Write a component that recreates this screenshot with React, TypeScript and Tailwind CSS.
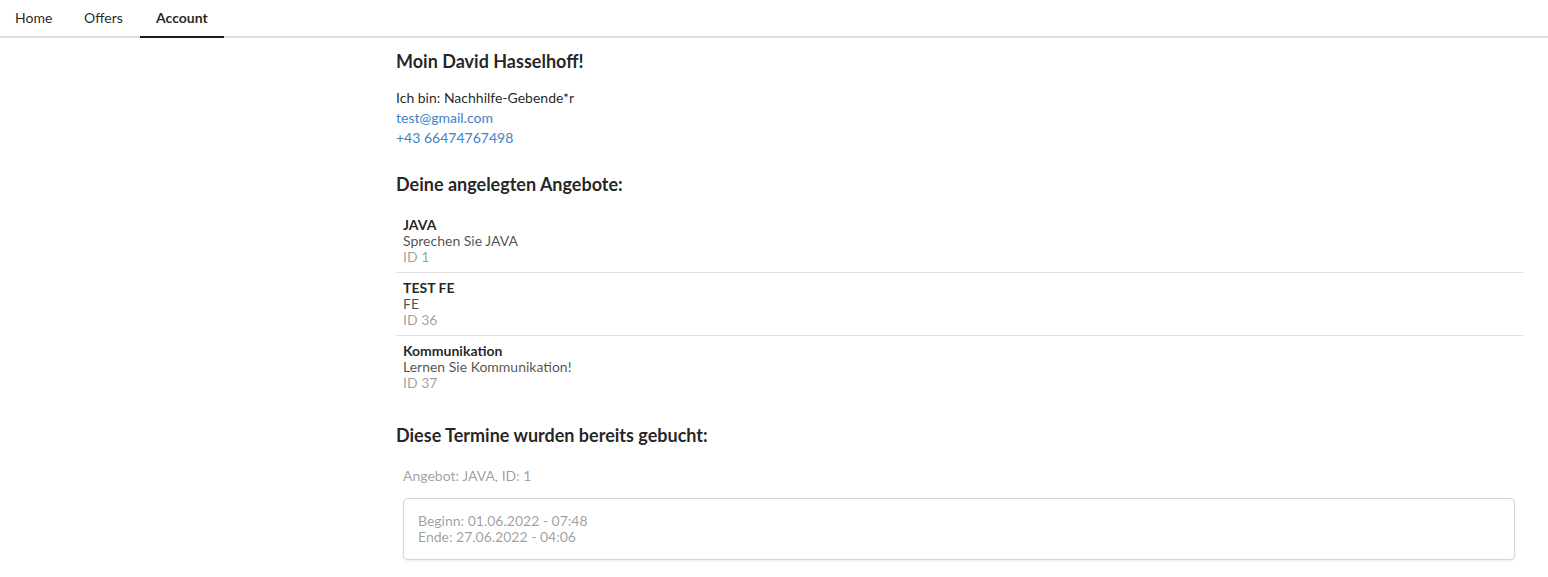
const offers = [
  { title: "JAVA", desc: "Sprechen Sie JAVA", id: 1 },
  { title: "TEST FE", desc: "FE", id: 36 },
  { title: "Kommunikation", desc: "Lernen Sie Kommunikation!", id: 37 },
];

const tabs = ["Home", "Offers", "Account"];

export default function App() {
  const active = "Account";

  return (
    <div className="min-h-screen bg-white text-[14px] text-[rgba(0,0,0,0.87)] font-['Lato','Liberation_Sans',sans-serif]">
      <div className="flex border-b-2 border-[#dededf]">
        {tabs.map((t) => (
          <div
            key={t}
            className={`h-[38px] pb-[2px] px-[15px] flex items-center -mb-[2px] border-b-2 ${
              t === active ? "border-[#1b1c1d] font-bold" : "border-transparent"
            } ${t === "Home" ? "w-[69px]" : t === "Offers" ? "w-[71px]" : "w-[84px] px-[16px]"}`}
          >
            {t}
          </div>
        ))}
      </div>

      <div className="pl-[396px] pr-[25px]">
        <h3 className="mt-[12px] text-[18px] leading-[23px] font-bold">Moin David Hasselhoff!</h3>

        <div className="mt-[15px] leading-[20px]">
          <div>Ich bin: Nachhilfe-Gebende*r</div>
          <div className="text-[#4183c4]">test@gmail.com</div>
          <div className="text-[#4183c4]">+43 66474767498</div>
        </div>

        <h3 className="mt-[25px] text-[18px] leading-[23px] font-bold">Deine angelegten Angebote:</h3>

        <div className="mt-[14px]">
          {offers.map((o, i) => (
            <div
              key={o.id}
              className={`px-[7px] py-[7px] leading-[16px] ${i > 0 ? "border-t border-[#dededf]" : ""}`}
            >
              <div className="font-bold">{o.title}</div>
              <div className="text-[rgba(0,0,0,0.7)]">{o.desc}</div>
              <div className="text-[rgba(0,0,0,0.4)]">ID {o.id}</div>
            </div>
          ))}
        </div>

        <h3 className="mt-[26px] text-[18px] leading-[23px] font-bold">Diese Termine wurden bereits gebucht:</h3>

        <div className="pl-[8px] pr-[9px]">
          <div className="mt-[19px] -ml-[1px] leading-[20px] text-[rgba(0,0,0,0.4)]">Angebot: JAVA, ID: 1</div>
          <div className="mt-[13px] rounded-[4px] bg-white px-[14px] py-[14px] leading-[16px] text-[rgba(0,0,0,0.4)] shadow-[0_1px_3px_0_#d4d4d5,0_0_0_1px_#d4d4d5]">
            <div>Beginn: 01.06.2022 - 07:48</div>
            <div>Ende: 27.06.2022 - 04:06</div>
          </div>
        </div>
      </div>
    </div>
  );
}
